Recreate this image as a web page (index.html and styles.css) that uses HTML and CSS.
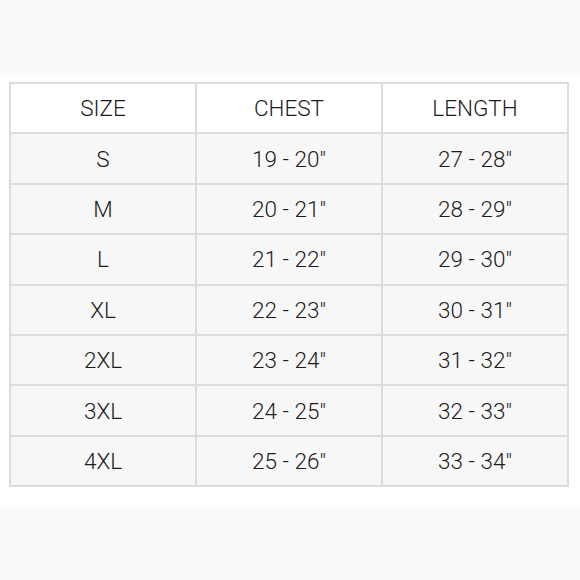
FILE: index.html
```html
<!DOCTYPE html>
<html>
<head>
<meta charset="utf-8">
<link rel="stylesheet" href="styles.css">
</head>
<body>
<div class="band"></div>
<main class="middle">
<table class="size-table">
<thead>
<tr><th>SIZE</th><th>CHEST</th><th>LENGTH</th></tr>
</thead>
<tbody>
<tr><td>S</td><td>19 - 20"</td><td>27 - 28"</td></tr>
<tr><td>M</td><td>20 - 21"</td><td>28 - 29"</td></tr>
<tr><td>L</td><td>21 - 22"</td><td>29 - 30"</td></tr>
<tr><td>XL</td><td>22 - 23"</td><td>30 - 31"</td></tr>
<tr><td>2XL</td><td>23 - 24"</td><td>31 - 32"</td></tr>
<tr><td>3XL</td><td>24 - 25"</td><td>32 - 33"</td></tr>
<tr><td>4XL</td><td>25 - 26"</td><td>33 - 34"</td></tr>
</tbody>
</table>
</main>
<div class="band"></div>
</body>
</html>
```
FILE: styles.css
```css
html, body {
  margin: 0;
  padding: 0;
  background: #ffffff;
}
body {
  width: 580px;
  height: 580px;
  overflow: hidden;
  font-family: Roboto, "Liberation Sans", sans-serif;
  font-weight: 300;
  color: #1c1c1c;
}
.band {
  height: 75px;
  background: #fafafa;
}
.middle {
  height: 430px;
  background: #fff;
  padding: 7px 0 0 9px;
  box-sizing: border-box;
}
.size-table {
  border-collapse: collapse;
  width: 560px;
  table-layout: fixed;
}
.size-table th,
.size-table td {
  border: 2px solid #dcdcdc;
  height: 50.4px;
  padding: 0;
  text-align: center;
  vertical-align: middle;
  font-size: 22.5px;
  font-weight: 300;
  box-sizing: border-box;
}
.size-table th {
  background: #fff;
}
.size-table td {
  background: #f7f7f7;
}
```
